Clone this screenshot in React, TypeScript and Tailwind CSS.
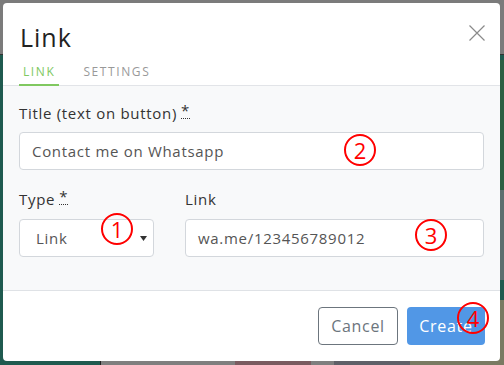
import React from "react";

const font = { fontFamily: '"Open Sans", "DejaVu Sans", sans-serif' };

function Mark({ n, className }: { n: string; className: string }) {
  return (
    <div
      className={
        "absolute w-[32px] h-[32px] rounded-full border-[2px] border-[#ff0000] flex items-center justify-center text-[#ff0000] text-[22px] leading-none pointer-events-none tracking-normal " +
        className
      }
    >
      {n}
    </div>
  );
}

function Req() {
  return (
    <abbr className="no-underline border-b border-dotted border-[#333] ml-[4px] leading-none">*</abbr>
  );
}

export default function App() {
  return (
    <div className="relative w-[504px] h-[365px] overflow-hidden bg-[#7b7b7b]" style={font}>
      {/* backdrop page */}
      <div className="absolute left-0 top-[55px] w-[504px] h-[310px] bg-[#1f5a4f]" />
      <div className="absolute left-0 top-[54px] w-[504px] h-[1px] bg-[#333]" />
      <div className="absolute left-[100px] top-[300px] w-[404px] h-[65px] bg-[#7f7f7f] border-l border-[#222]" />
      <div className="absolute left-[235px] top-[300px] w-[76px] h-[65px] bg-[#7a5b60]" />
      <div className="absolute left-[334px] top-[300px] w-[76px] h-[65px] bg-[#5f6068]" />
      <div className="absolute left-[410px] top-[300px] w-[94px] h-[65px] bg-[#7a7a62]" />
      <div className="absolute left-[480px] top-[60px] w-[24px] h-[130px] bg-[#2c5f42]" />
      <div className="absolute left-[480px] top-[190px] w-[24px] h-[90px] bg-[#5c6f6f]" />

      {/* modal */}
      <div className="absolute left-[3px] top-[3px] w-[497px] h-[358px] bg-white rounded-[4px] flex flex-col overflow-hidden tracking-[0.7px]">
        <div className="flex items-start justify-between pl-[17px] pr-[15px] pt-[19px]">
          <div className="text-[25px] leading-[30px] text-[#222] tracking-[1px]">Link</div>
          <svg width="16" height="16" viewBox="0 0 16 16" className="mt-[3px]">
            <path d="M0.5 0.5 L15.5 15.5 M15.5 0.5 L0.5 15.5" stroke="#8a8a8a" strokeWidth="1.2" />
          </svg>
        </div>
        <div className="flex pl-[16px] mt-[11px] border-b border-[#e2e4e8] h-[23px]">
          <div className="px-[4px] text-[12px] tracking-[1.6px] text-[#80c860] border-b-[2px] border-[#80c860] leading-[17px] -mb-[1px]">
            LINK
          </div>
          <div className="ml-[24px] text-[12px] tracking-[1.6px] text-[#999] leading-[17px]">SETTINGS</div>
        </div>
        <div className="relative bg-[#f8f9fa] flex-1 px-[16px] pt-[17px] border-b border-[#dfe2e6]">
          <div className="text-[15px] text-[#333] leading-[20px] flex items-start">
            Title (text on button) <Req />
          </div>
          <div className="mt-[9px] h-[38px] bg-white border border-[#d3d7dc] rounded-[4px] flex items-center px-[12px] text-[15px] text-[#555]">
            Contact me on Whatsapp
          </div>
          <div className="flex gap-[31px] mt-[19px]">
            <div className="w-[135px]">
              <div className="text-[15px] text-[#333] leading-[20px] flex items-start">
                Type <Req />
              </div>
              <div className="mt-[10px] h-[38px] bg-white border border-[#d3d7dc] rounded-[4px] flex items-center justify-between pl-[16px] pr-[6px] text-[15px] text-[#555]">
                <span>Link</span>
                <svg width="7" height="5" viewBox="0 0 7 5" className="mt-[1px]">
                  <path d="M0 0 L7 0 L3.5 5 Z" fill="#333" />
                </svg>
              </div>
            </div>
            <div className="flex-1">
              <div className="text-[15px] text-[#333] leading-[20px]">Link</div>
              <div className="mt-[10px] h-[38px] bg-white border border-[#d3d7dc] rounded-[4px] flex items-center px-[12px] text-[15px] text-[#555]">
                wa.me/123456789012
              </div>
            </div>
          </div>
          <Mark n="2" className="left-[341px] top-[48px]" />
          <Mark n="1" className="left-[98px] top-[127px]" />
          <Mark n="3" className="left-[412px] top-[133px]" />
        </div>
        <div className="relative h-[70px] flex items-center justify-end gap-[9px] pr-[15px]">
          <div className="h-[38px] w-[80px] border border-[#6c757d] rounded-[4px] flex items-center justify-center text-[16px] text-[#6c757d]">
            Cancel
          </div>
          <div className="h-[38px] w-[78px] bg-[#5197e6] rounded-[4px] flex items-center justify-center text-[16px] text-white">
            Create
          </div>
          <Mark n="4" className="left-[454px] top-[11px]" />
        </div>
      </div>
    </div>
  );
}
